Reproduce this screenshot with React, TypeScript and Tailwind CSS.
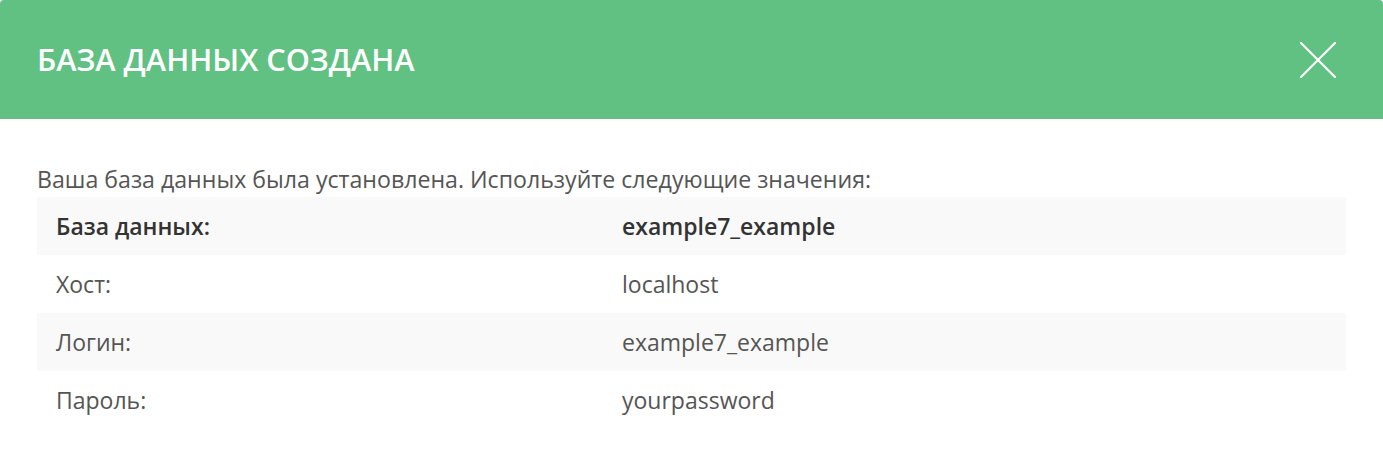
import React from "react";

const rows: { label: string; value: string; bold?: boolean }[] = [
  { label: "База данных:", value: "example7_example", bold: true },
  { label: "Хост:", value: "localhost" },
  { label: "Логин:", value: "example7_example" },
  { label: "Пароль:", value: "yourpassword" },
];

export default function App() {
  return (
    <div className="w-[1383px] h-[467px] bg-white font-['Open_Sans',sans-serif]">
      <div className="h-[119px] bg-[#60c183] rounded-t-[4px] flex items-center justify-between pl-[37px] pr-[47px]">
        <h1 className="text-white text-[30.7px] font-semibold">БАЗА ДАННЫХ СОЗДАНА</h1>
        <button className="w-[36px] h-[36px] flex items-center justify-center" aria-label="close">
          <svg width="36" height="36" viewBox="0 0 36 36" fill="none" stroke="white" strokeWidth="2.2" strokeLinecap="round">
            <path d="M1 1L35 35M35 1L1 35" />
          </svg>
        </button>
      </div>
      <div className="px-[37px] pt-[43px]">
        <p className="text-[23.15px] leading-[35px] text-[#555]">
          Ваша база данных была установлена. Используйте следующие значения:
        </p>
        <div className="w-[1309px]">
          {rows.map((r, i) => (
            <div
              key={i}
              className={`grid grid-cols-[566px_1fr] h-[58px] items-center text-[23px] ${i % 2 === 0 ? "bg-[#f9f9f9]" : "bg-white"} ${r.bold ? "font-semibold text-[#333]" : "text-[#555]"}`}
            >
              <div className="pl-[19px]">{r.label}</div>
              <div className="pl-[19px]">{r.value}</div>
            </div>
          ))}
        </div>
      </div>
    </div>
  );
}
